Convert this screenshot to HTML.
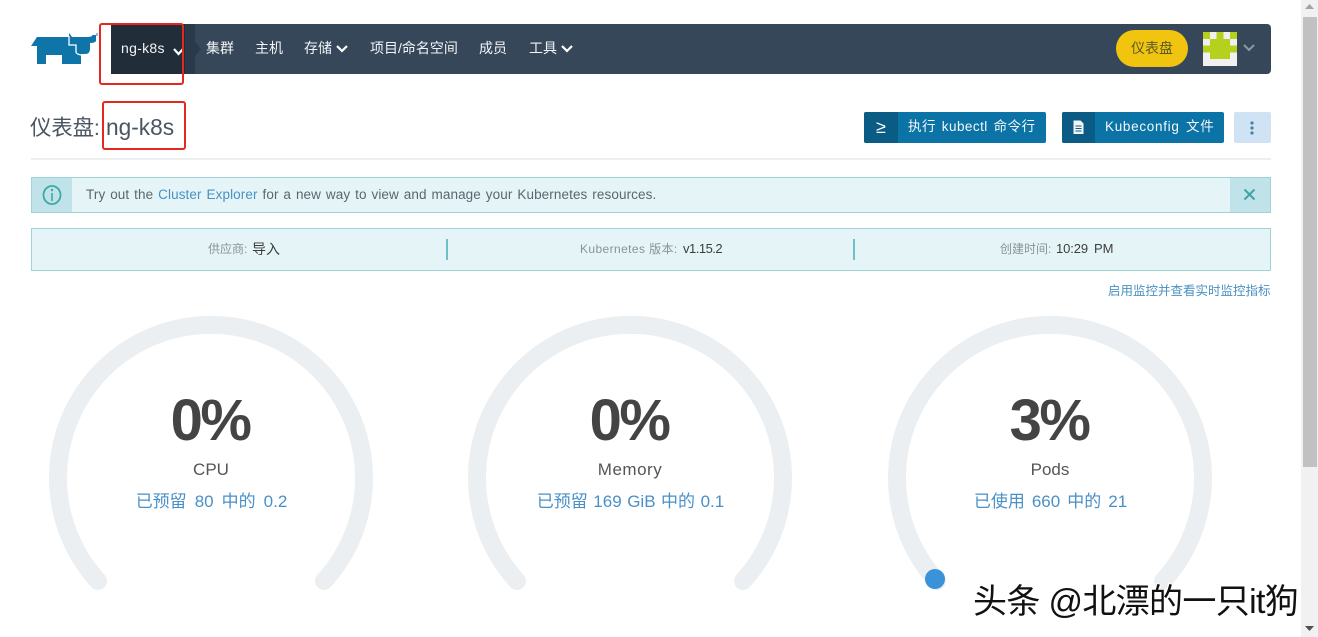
<!DOCTYPE html>
<html><head><meta charset="utf-8"><style>
html,body{margin:0;padding:0;background:#fff;width:1318px;height:637px;overflow:hidden}
body{position:relative;font-family:"Liberation Sans","Noto Sans CJK SC",sans-serif;color:#4a5561}
.a{position:absolute;white-space:nowrap}
.nav{color:#f2f4f6;font-size:14px;line-height:50px;top:23px}
.c{text-align:center;transform:translateX(-50%)}
.big{font-size:58px;font-weight:bold;color:#444;top:386px;line-height:70px;letter-spacing:-2.500px}
.lab{font-size:17px;color:#555;top:458px;line-height:24px}
.sub{font-size:17px;color:#4a90c8;top:489px;line-height:26px}
.mut{color:#8a9298;font-size:12px}
.val{color:#3d3d3d;font-size:13px}
</style></head><body>

<svg class="a" style="left:31px;top:33px" width="68" height="34" viewBox="31 33 68 34">
<path fill="#0f75a8" d="M31 46 L37 37 H69 V33 L72 37 H88 Q92 37 92.500 35 H96 V41 Q95 43 90 43 V49 Q90 54 85 54 H81 V64 H62 V55 H46 V64 H37 V46 Z"/>
<path fill="none" stroke="#fff" stroke-width="1.300" d="M69 36 V45 H76 V52 Q76 54 81 55"/>
<path fill="#8fbdd5" d="M96 33 H98 V36 H96 Z"/>
</svg>

<div class="a" style="left:111px;top:24px;width:1160px;height:50px;background:#354759;border-radius:0 4px 4px 0"></div>
<div class="a" style="left:111px;top:24px;width:74px;height:50px;background:#222d3a"></div>
<div class="a" style="left:185px;top:24px;width:10px;height:50px;background:#2b3a4a"></div>
<svg class="a" style="left:195px;top:42px" width="6" height="14"><path d="M0 0 L6 7 L0 14Z" fill="#2b3a4a"/></svg>

<div class="a nav" style="left:121px;letter-spacing:.3px">ng-k8s</div>
<svg class="a" style="left:172px;top:47px" width="13" height="10"><path d="M2 2 L6.500 7 L11 2" fill="none" stroke="#fff" stroke-width="2.200"/></svg>
<div class="a nav" style="left:206px">集群</div>
<div class="a nav" style="left:255px">主机</div>
<div class="a nav" style="left:304px">存储</div>
<svg class="a" style="left:335px;top:44px" width="14" height="10"><path d="M2 2 L7 7 L12 2" fill="none" stroke="#fff" stroke-width="2.200"/></svg>
<div class="a nav" style="left:370px">项目/命名空间</div>
<div class="a nav" style="left:479px">成员</div>
<div class="a nav" style="left:529px">工具</div>
<svg class="a" style="left:560px;top:44px" width="14" height="10"><path d="M2 2 L7 7 L12 2" fill="none" stroke="#fff" stroke-width="2.200"/></svg>

<div class="a" style="left:1116px;top:30px;width:72px;height:37px;border-radius:19px;background:#f1c40f;color:#5c5a20;font-size:14px;line-height:37px;text-align:center">仪表盘</div>
<svg class="a" style="left:1203px;top:32px" width="34" height="34" viewBox="0 0 5 5" shape-rendering="crispEdges">
<rect width="5" height="5" fill="#f0f0f0"/>
<path fill="#b5d11e" d="M0 0H1V1H0Z M2 0H3V1H2Z M4 0H5V1H4Z M1 1H4V2H1Z M0 2H5V3H0Z M1 3H4V4H1Z"/>
</svg>
<svg class="a" style="left:1242px;top:43px" width="14" height="10"><path d="M2 2 L7 7 L12 2" fill="none" stroke="#8b98a5" stroke-width="2"/></svg>

<div class="a" style="left:30px;top:112px;font-size:21.500px;line-height:32px;color:#4a5561;letter-spacing:-.2px">仪表盘:</div>
<div class="a" style="left:106px;top:110px;font-size:22.700px;line-height:34px;color:#4a5561">ng-k8s</div>

<div class="a" style="left:864px;top:112px;width:182px;height:31px;background:#0b73a5;border-radius:2px"></div>
<div class="a" style="left:864px;top:112px;width:34px;height:31px;background:#0a5c85;border-radius:2px 0 0 2px;color:#fff;font-size:18px;line-height:30px;text-align:center">≥</div>
<div class="a" style="left:908px;top:112px;color:#f4f8fb;font-size:13.500px;line-height:30px;word-spacing:1.700px;letter-spacing:.45px">执行 kubectl 命令行</div>

<div class="a" style="left:1062px;top:112px;width:162px;height:31px;background:#0b73a5;border-radius:2px"></div>
<div class="a" style="left:1062px;top:112px;width:33px;height:31px;background:#0a5c85;border-radius:2px 0 0 2px"></div>
<svg class="a" style="left:1072px;top:120px" width="13" height="15"><path d="M1.500 .5H8.500L11.500 3.500V14H1.500Z" fill="#f1f5f8"/><path d="M3.500 6H9.500M3.500 8.500H9.500M3.500 11H9.500" stroke="#0a5c85" stroke-width="1"/></svg>
<div class="a" style="left:1105px;top:112px;color:#f4f8fb;font-size:13.500px;line-height:30px;word-spacing:2px;letter-spacing:.7px">Kubeconfig 文件</div>

<div class="a" style="left:1234px;top:112px;width:37px;height:31px;background:#cfe3f5;border-radius:2px"></div>
<svg class="a" style="left:1249px;top:120px" width="6" height="16"><circle cx="3" cy="3" r="1.600" fill="#4f7f9f"/><circle cx="3" cy="8" r="1.600" fill="#4f7f9f"/><circle cx="3" cy="13" r="1.600" fill="#4f7f9f"/></svg>

<div class="a" style="left:31px;top:158px;width:1240px;height:2px;background:#eceff1"></div>

<div class="a" style="left:31px;top:177px;width:1238px;height:34px;background:#e5f5f7;border:1px solid #9fd3d9"></div>
<div class="a" style="left:32px;top:178px;width:40px;height:34px;background:#bfe3e8"></div>
<div class="a" style="left:1230px;top:178px;width:40px;height:34px;background:#bfe3e8"></div>
<svg class="a" style="left:41px;top:184px" width="22" height="22"><ellipse cx="11" cy="11" rx="8.500" ry="9" fill="none" stroke="#3fa7a7" stroke-width="1.800"/><path d="M11 9V17" stroke="#3fa7a7" stroke-width="1.600"/><circle cx="11" cy="6" r="1.200" fill="#3fa7a7"/></svg>
<svg class="a" style="left:1242px;top:187px" width="15" height="15"><path d="M2.500 2.500L12.500 12.500M12.500 2.500L2.500 12.500" stroke="#3fa3a8" stroke-width="2"/></svg>
<div class="a" style="left:86px;top:178px;font-size:13.500px;line-height:34px;color:#5b6670;letter-spacing:.1px;word-spacing:1.050px">Try out the <span style="color:#4a90c2">Cluster Explorer</span> for a new way to view and manage your Kubernetes resources.</div>

<div class="a" style="left:31px;top:228px;width:1238px;height:41px;background:#e5f5f7;border:1px solid #9fd3d9"></div>
<div class="a" style="left:446px;top:239px;width:2px;height:21px;background:#6fbfc6"></div>
<div class="a" style="left:853px;top:239px;width:2px;height:21px;background:#6fbfc6"></div>
<div class="a mut" style="left:208px;top:238px;line-height:22px">供应商:</div>
<div class="a val" style="left:252px;top:238px;line-height:22px;font-size:14px">导入</div>
<div class="a mut" style="left:580px;top:238px;line-height:22px;letter-spacing:.4px">Kubernetes 版本:</div>
<div class="a val" style="left:683px;top:238px;line-height:22px;letter-spacing:-.5px">v1.15.2</div>
<div class="a mut" style="left:1000px;top:238px;line-height:22px">创建时间:</div>
<div class="a val" style="left:1056px;top:238px;line-height:22px;letter-spacing:-.1px;word-spacing:2.500px">10:29 PM</div>

<div class="a" style="left:1108px;top:283px;font-size:12.500px;line-height:17px;color:#4a90c2">启用监控并查看实时监控指标</div>

<svg class="a" style="left:0;top:300px" width="1300" height="337">
<g fill="none" stroke="#ebeff1" stroke-width="18" stroke-linecap="round">
<path d="M98 281 A153 153 0 1 1 324 281"/>
<path d="M517 281 A153 153 0 1 1 743 281"/>
<path d="M937 281 A153 153 0 1 1 1163 281"/>
</g>
<circle cx="935" cy="279" r="10" fill="#3a92d8"/>
</svg>

<div class="a c big" style="left:210px">0%</div>
<div class="a c lab" style="left:211px">CPU</div>
<div class="a c sub" style="left:211.500px;word-spacing:3.300px">已预留 80 中的 0.2</div>
<div class="a c big" style="left:629px">0%</div>
<div class="a c lab" style="left:630px;letter-spacing:.5px">Memory</div>
<div class="a c sub" style="left:630.500px;word-spacing:.8px">已预留 169 GiB 中的 0.1</div>
<div class="a c big" style="left:1049px">3%</div>
<div class="a c lab" style="left:1050px">Pods</div>
<div class="a c sub" style="left:1050.500px;word-spacing:2.300px">已使用 660 中的 21</div>

<div class="a" style="left:99px;top:23px;width:81px;height:58px;border:2.500px solid #e5281e;border-radius:3px"></div>
<div class="a" style="left:102px;top:101px;width:80px;height:45px;border:2.500px solid #e5281e;border-radius:3px"></div>

<div class="a" style="left:973px;top:582px;font-size:34px;line-height:40px;color:#111;text-shadow:1px 1px 0 #fff,-1px -1px 0 #fff;letter-spacing:-.65px">头条 @北漂的一只it狗</div>

<div class="a" style="left:1301px;top:0;width:17px;height:637px;background:#f1f1f1"></div>
<div class="a" style="left:1303px;top:17px;width:14px;height:450px;background:#c1c1c1"></div>
<svg class="a" style="left:1305px;top:4px" width="9" height="6"><path d="M0 5L4.500 0L9 5Z" fill="#a3a3a3"/></svg>
<svg class="a" style="left:1305px;top:626px" width="9" height="6"><path d="M0 0L4.500 5L9 0Z" fill="#505050"/></svg>
</body></html>
